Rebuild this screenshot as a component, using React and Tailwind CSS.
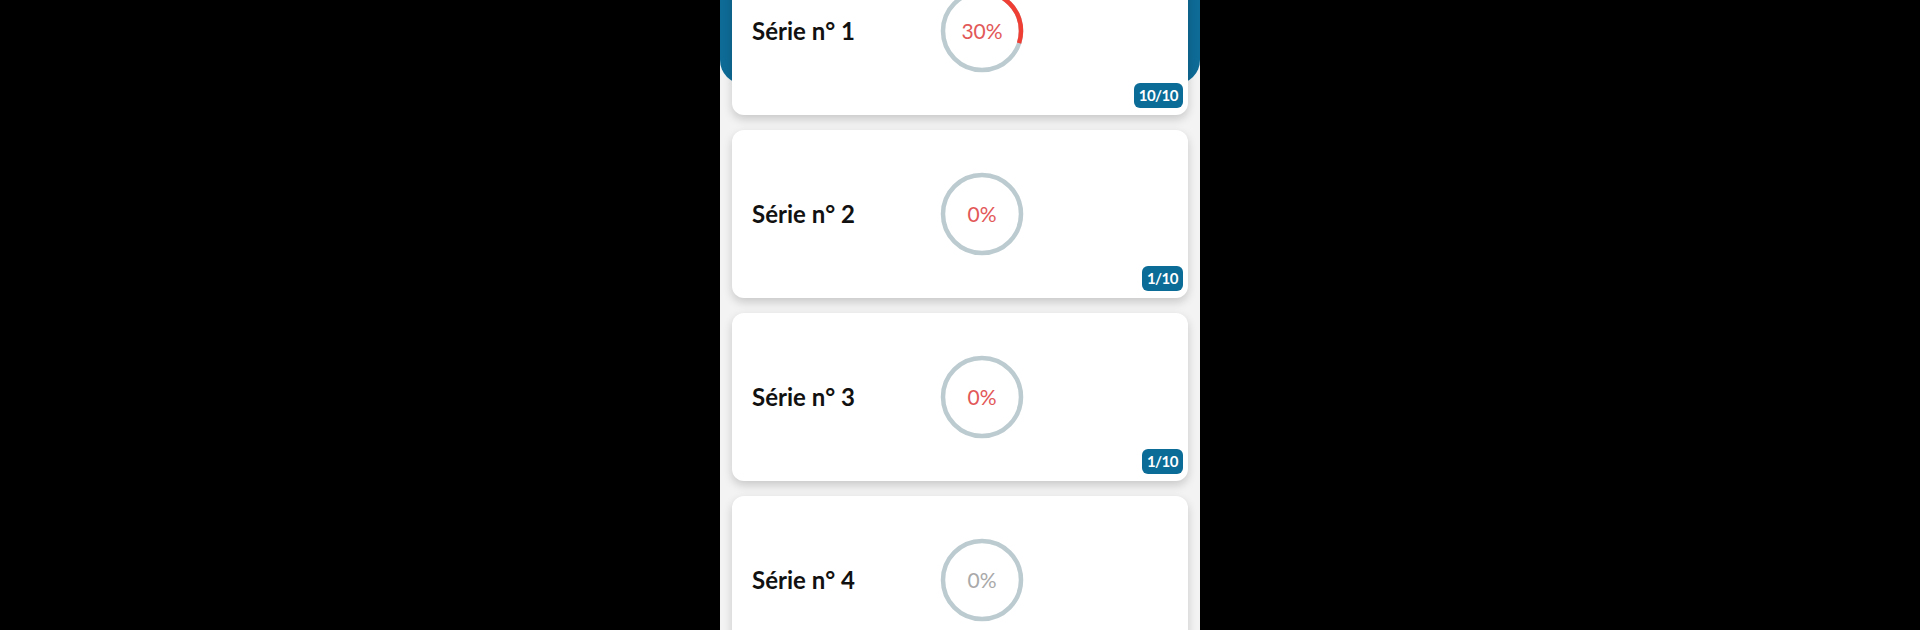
import React from "react"

const series = [
  { n: 1, pct: 30, done: "10/10" },
  { n: 2, pct: 0, done: "1/10" },
  { n: 3, pct: 0, done: "1/10" },
  { n: 4, pct: 0, done: "1/10", fading: true },
]

function Ring({ pct, fading }) {
  const r = 39
  const c = 2 * Math.PI * r
  return (
    <div className="relative w-[84px] h-[84px] shrink-0">
      <svg width="84" height="84" viewBox="0 0 84 84">
        <circle cx="42" cy="42" r={r} fill="none" stroke="#bccbd0" strokeWidth="4.5" />
        {pct > 0 && (
          <circle
            cx="42"
            cy="42"
            r={r}
            fill="none"
            stroke="#ef3f35"
            strokeWidth="4.5"
            strokeDasharray={`${(c * pct) / 100} ${c}`}
            transform="rotate(-90 42 42)"
          />
        )}
      </svg>
      <div
        className={`absolute inset-0 flex items-center justify-center text-[21px] font-[Lato,sans-serif] ${
          fading ? "text-[#a9a9a9]" : "text-[#e25858]"
        }`}
      >
        {pct}%
      </div>
    </div>
  )
}

function Card({ s }) {
  return (
    <div className="relative h-[168px] shrink-0 bg-white rounded-[12px] shadow-[0_4px_10px_rgba(0,0,0,0.18)] flex items-center pl-5">
      <div className="w-[188px] shrink-0 text-[24px] font-bold text-[#111] font-[Lato,sans-serif]">
        Série n° {s.n}
      </div>
      <Ring pct={s.pct} fading={s.fading} />
      {!s.fading && (
        <span className="absolute right-[5px] bottom-[7px] px-[5px] h-[25px] flex items-center rounded-[6px] bg-[#0b6c97] text-white text-[15px] font-bold font-[Lato,sans-serif] tracking-[-0.5px]">
          {s.done}
        </span>
      )}
    </div>
  )
}

export default function App() {
  return (
    <div className="h-[630px] w-full bg-black flex justify-center overflow-hidden">
      <div className="w-[480px] h-[630px] bg-[#f3f3f3] overflow-hidden">
        <div className="h-[84px] bg-[#0e6b96] rounded-b-[24px]" />
        <div className="mt-[-137px] px-3 flex flex-col gap-[15px]">
          {series.map((s) => (
            <Card key={s.n} s={s} />
          ))}
        </div>
      </div>
    </div>
  )
}
